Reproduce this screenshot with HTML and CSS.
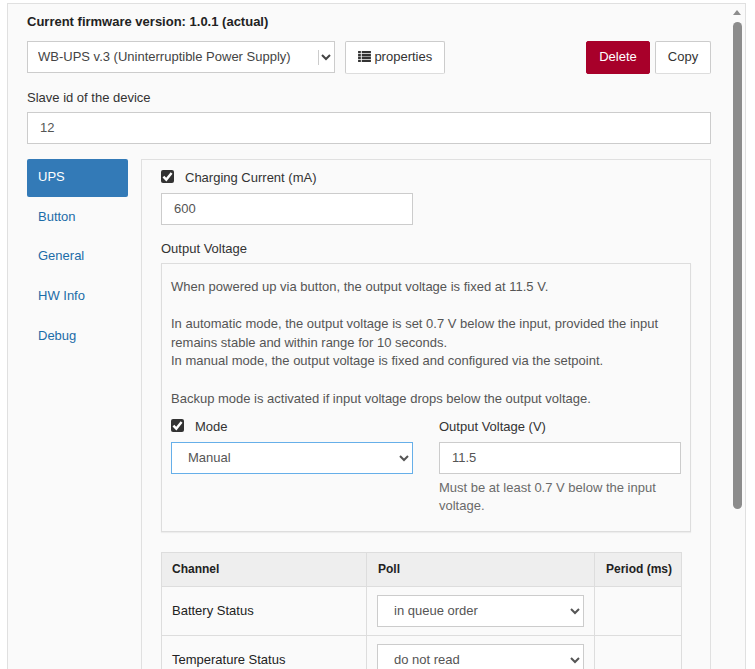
FILE: index.html
```html
<!DOCTYPE html>
<html lang="en">
<head>
<meta charset="utf-8">
<title>WB-UPS v.3</title>
<link rel="stylesheet" href="styles.css">
</head>
<body>
<div class="well">
  <div class="scrollbar"><span class="scroll-up"></span><span class="scroll-thumb"></span></div>
  <div class="firmware">Current firmware version: 1.0.1 (actual)</div>
  <div class="device-row">
    <div class="device-select">
      <select class="control"><option>WB-UPS v.3 (Uninterruptible Power Supply)</option></select>
      <span class="select-divider"></span>
    </div>
    <button class="btn props">
      <svg class="list-icon" viewBox="0 0 14 12" width="13" height="11"><path d="M0 0h3v2.4H0zM4 0h10v2.4H4zM0 3.2h3v2.4H0zM4 3.2h10v2.4H4zM0 6.4h3v2.4H0zM4 6.4h10v2.4H4zM0 9.6h3V12H0zM4 9.6h10V12H4z" fill="#333"/></svg>
      properties
    </button>
    <div class="device-actions">
      <button class="btn danger">Delete</button>
      <button class="btn">Copy</button>
    </div>
  </div>
  <label class="field-label slave-label">Slave id of the device</label>
  <input class="control slave-input" value="12">
  <div class="tabs-row">
    <ul class="tabs">
      <li class="tab active">UPS</li>
      <li class="tab">Button</li>
      <li class="tab">General</li>
      <li class="tab">HW Info</li>
      <li class="tab">Debug</li>
    </ul>
    <div class="tab-panel">
      <label class="check-label"><span class="check"><svg viewBox="0 0 13 13" width="13" height="13"><path d="M2.4 6.6l2.9 3 5.3-6.6" fill="none" stroke="#fff" stroke-width="2.4"/></svg></span>Charging Current (mA)</label>
      <input class="control half" value="600">
      <div class="field-label group-title">Output Voltage</div>
      <div class="group">
        <p class="desc">When powered up via button, the output voltage is fixed at 11.5 V.</p>
        <p class="desc">In automatic mode, the output voltage is set 0.7 V below the input, provided the input remains stable and within range for 10 seconds.<br>In manual mode, the output voltage is fixed and configured via the setpoint.</p>
        <p class="desc">Backup mode is activated if input voltage drops below the output voltage.</p>
        <div class="group-cols">
          <div class="col">
            <label class="check-label"><span class="check"><svg viewBox="0 0 13 13" width="13" height="13"><path d="M2.4 6.6l2.9 3 5.3-6.6" fill="none" stroke="#fff" stroke-width="2.4"/></svg></span>Mode</label>
            <select class="control focused"><option>Manual</option></select>
          </div>
          <div class="col">
            <label class="field-label col-label">Output Voltage (V)</label>
            <input class="control" value="11.5">
            <p class="help">Must be at least 0.7 V below the input voltage.</p>
          </div>
        </div>
      </div>
      <table class="channels">
        <thead>
          <tr><th class="c1">Channel</th><th class="c2">Poll</th><th class="c3">Period (ms)</th></tr>
        </thead>
        <tbody>
          <tr><td class="name">Battery Status</td><td><select class="control"><option>in queue order</option></select></td><td></td></tr>
          <tr><td class="name">Temperature Status</td><td><select class="control"><option>do not read</option></select></td><td></td></tr>
        </tbody>
      </table>
    </div>
  </div>
</div>
</body>
</html>
```
FILE: styles.css
```css
* { box-sizing: border-box; }
html, body { margin: 0; height: 669px; overflow: hidden; background: #fff; }
body {
  font-family: "Liberation Sans", Arial, sans-serif;
  font-size: 13px;
  line-height: 18.5px;
  color: #333;
}
.well {
  position: relative;
  margin: 3px 9px 0 7px;
  height: 700px;
  padding: 9px 34px 0 19px;
  background: #fafafa;
  border: 1px solid #e0e0e0;
}
.scrollbar { position: absolute; top: 0; right: 3px; width: 9px; }
.scroll-up {
  display: block;
  width: 0;
  margin: 6px 0 0 0;
  border-left: 4.5px solid transparent;
  border-right: 4.5px solid transparent;
  border-bottom: 5px solid #8c8c8c;
}
.scroll-thumb { display: block; margin-top: 7px; height: 487px; background: #8c8c8c; border-radius: 5px; }
.firmware { font-weight: 700; color: #222; margin-bottom: 9px; }
.device-row { display: flex; align-items: flex-start; margin-bottom: 1px; }
.device-select { position: relative; width: 308px; }
.device-select .control { padding: 0 6px; color: #444; }
.select-divider { position: absolute; left: 291px; top: 9px; height: 15px; width: 1px; background: #ccc; }
.control {
  display: block;
  width: 100%;
  height: 32px;
  padding: 0 12px 2px;
  font: inherit;
  color: #555;
  background: #fff;
  border: 1px solid #ccc;
  border-radius: 0;
  outline: 0;
}
.btn {
  height: 33px;
  padding: 0 12px;
  font: inherit;
  color: #333;
  background: #fff;
  border: 1px solid #ccc;
  border-bottom-color: #ddd;
  border-radius: 2px;
}
.props { margin-left: 10px; width: 100px; padding: 0; }
.list-icon { vertical-align: -1px; }
.device-actions { margin-left: auto; display: flex; gap: 5px; }
.danger { width: 64px; padding: 0; background: #a8002a; border-color: #a8002a; color: #fff; }
.device-actions .btn:last-child { width: 56px; padding: 0; }
.field-label { display: block; color: #333; }
.slave-label { margin-top: 15px; margin-bottom: 5px; }
.tabs-row { display: flex; margin-top: 15px; }
.tabs { list-style: none; margin: 0; padding: 0; width: 101px; flex: none; }
.tab { height: 38px; padding: 8.9px 11px 0; margin-bottom: 1.75px; color: #1c6ca8; }
.tab.active { background: #337ab7; color: #fff; border-radius: 2px; }
.tab-panel {
  flex: none;
  width: 570px;
  margin-left: 13px;
  padding: 9px 19px 0;
  border: 1px solid #e0e0e0;
  height: 600px;
}
.check-label { display: flex; align-items: center; height: 18px; color: #333; }
.check {
  width: 13px;
  height: 13px;
  margin: -3px 11px 0 0;
  background: #333;
  border-radius: 2px;
  display: block;
}
.check svg { display: block; }
.half { width: 252px; margin-top: 6px; }
.group-title { margin-top: 15px; margin-bottom: 4px; }
.group {
  height: 269px;
  padding: 14px 9px 0;
  border: 1px solid #ddd;
  box-shadow: 0 1px 1px rgba(0, 0, 0, .05);
}
.desc { margin: 0 0 19px; color: #555; }
.group-cols { display: flex; gap: 26px; margin-top: -9px; }
.col { width: 242px; }
.col .check-label { margin-bottom: 6px; }
.col-label { margin-bottom: 6px; height: 18px; }
.focused { border-color: #66afe9; }
.help { margin: 5px 0 0; line-height: 18px; color: #6a6a6a; }
.channels {
  margin-top: 20px;
  width: 520px;
  border-collapse: collapse;
  table-layout: fixed;
}
.channels th, .channels td { border: 1px solid #ddd; padding: 0 10px; text-align: left; }
.channels th { height: 34px; background: #eee; color: #222; font-weight: 700; font-size: 12px; white-space: nowrap; }
.channels td { height: 49px; color: #222; }
.channels .name { padding-top: 2px; }
.channels .control { padding: 0 12px; }
.channels .c2, .channels .c3 { padding-left: 11px; }
.c1 { width: 205px; }
.c2 { width: 228px; }
.c3 { width: 87px; }
```
